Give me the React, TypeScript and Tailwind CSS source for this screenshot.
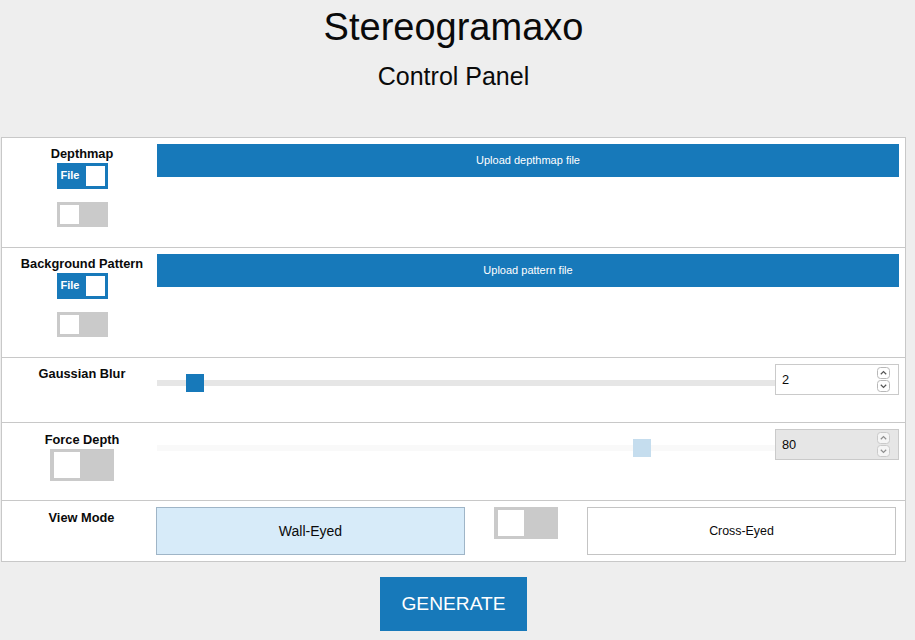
import React from "react";

const font = { fontFamily: '"Liberation Sans", Arial, sans-serif' };

function FileSwitch({ on }: { on: boolean }) {
  if (on) {
    return (
      <div className="relative w-[51px] h-[26px] bg-[#1779ba]">
        <span className="absolute left-[4px] top-[5px] text-[11px] leading-[14px] font-bold text-white">File</span>
        <div className="absolute right-[3px] top-[3px] w-[19px] h-[20px] bg-white" />
      </div>
    );
  }
  return (
    <div className="relative w-[51px] h-[25px] bg-[#cacaca]">
      <div className="absolute left-[3px] top-[3px] w-[19px] h-[19px] bg-white" />
    </div>
  );
}

function BigSwitch() {
  return (
    <div className="relative w-[64px] h-[32px] bg-[#cacaca]">
      <div className="absolute left-[4px] top-[3px] w-[26px] h-[26px] bg-white" />
    </div>
  );
}

function Spinner() {
  return (
    <div className="flex flex-col gap-[1px] mr-[8px]">
      <svg width="13" height="12" viewBox="0 0 13 12">
        <rect x="0.5" y="0.5" width="12" height="11" rx="3" fill="#fff" stroke="#b8b8b8" />
        <path d="M3.8 7.2 L6.5 4.6 L9.2 7.2" fill="none" stroke="#555" strokeWidth="1.2" />
      </svg>
      <svg width="13" height="12" viewBox="0 0 13 12">
        <rect x="0.5" y="0.5" width="12" height="11" rx="3" fill="#fff" stroke="#b8b8b8" />
        <path d="M3.8 4.8 L6.5 7.4 L9.2 4.8" fill="none" stroke="#555" strokeWidth="1.2" />
      </svg>
    </div>
  );
}

function NumberBox({ value, disabled }: { value: string; disabled?: boolean }) {
  return (
    <div
      className={
        "w-[124px] h-[31px] border border-[#cacaca] flex items-center justify-between shrink-0 " +
        (disabled ? "bg-[#e6e6e6]" : "bg-white")
      }
    >
      <span className="pl-[6px] text-[12.8px] text-[#0a0a0a]">{value}</span>
      <div className={disabled ? "opacity-60" : ""}>
        <Spinner />
      </div>
    </div>
  );
}

function Slider({ left, disabled }: { left: number; disabled?: boolean }) {
  return (
    <div className="flex-1 relative h-[18px] mt-[10px] flex items-center">
      <div className={"w-full h-[6px] " + (disabled ? "bg-[#f9f9f9]" : "bg-[#e6e6e6]")} />
      <div
        className={"absolute top-0 w-[18px] h-[18px] " + (disabled ? "bg-[#c5ddee]" : "bg-[#1779ba]")}
        style={{ left }}
      />
    </div>
  );
}

function Label({ children, pt }: { children: React.ReactNode; pt: string }) {
  return (
    <div className={"text-[12.8px] leading-[16px] font-bold text-[#0a0a0a] text-center " + pt}>{children}</div>
  );
}

export default function App() {
  return (
    <div className="min-h-[640px] bg-[#eeeeee] text-[#0a0a0a]" style={font}>
      <div className="w-[907px]">
        <div className="pt-[8px] text-center">
          <h1 className="text-[38px] leading-[38px] font-normal">Stereogramaxo</h1>
          <h2 className="mt-[18px] text-[25px] leading-[25px] font-normal">Control Panel</h2>
        </div>

        <div className="mt-[48px] ml-[1px] w-[905px] bg-white border-t border-x border-[#c8c8c8]">
          {/* Depthmap */}
          <div className="h-[110px] border-b border-[#c8c8c8] flex">
            <div className="w-[155px] pl-[5px] flex flex-col items-center">
              <Label pt="pt-[8px]">Depthmap</Label>
              <div className="mt-[1px]">
                <FileSwitch on />
              </div>
              <div className="mt-[13px]">
                <FileSwitch on={false} />
              </div>
            </div>
            <div className="flex-1 pr-[6px] pt-[6px]">
              <div className="h-[33px] bg-[#1779ba] text-white text-[11px] flex items-center justify-center">
                Upload depthmap file
              </div>
            </div>
          </div>

          {/* Background Pattern */}
          <div className="h-[110px] border-b border-[#c8c8c8] flex">
            <div className="w-[155px] pl-[5px] flex flex-col items-center">
              <Label pt="pt-[8px]">Background Pattern</Label>
              <div className="mt-[1px]">
                <FileSwitch on />
              </div>
              <div className="mt-[13px]">
                <FileSwitch on={false} />
              </div>
            </div>
            <div className="flex-1 pr-[6px] pt-[6px]">
              <div className="h-[33px] bg-[#1779ba] text-white text-[11px] flex items-center justify-center">
                Upload pattern file
              </div>
            </div>
          </div>

          {/* Gaussian Blur */}
          <div className="h-[65px] border-b border-[#c8c8c8] flex">
            <div className="w-[155px] pl-[5px] flex flex-col items-center">
              <Label pt="pt-[8px]">Gaussian Blur</Label>
            </div>
            <div className="flex-1 pr-[6px] pt-[6px] flex items-start">
              <Slider left={29} />
              <NumberBox value="2" />
            </div>
          </div>

          {/* Force Depth */}
          <div className="h-[78px] border-b border-[#c8c8c8] flex">
            <div className="w-[155px] pl-[5px] flex flex-col items-center">
              <Label pt="pt-[9px]">Force Depth</Label>
              <div className="mt-[1px]">
                <BigSwitch />
              </div>
            </div>
            <div className="flex-1 pr-[6px] pt-[6px] flex items-start">
              <Slider left={476} disabled />
              <NumberBox value="80" disabled />
            </div>
          </div>

          {/* View Mode */}
          <div className="h-[61px] border-b border-[#c8c8c8] flex">
            <div className="w-[154px] pl-[5px] flex flex-col items-center">
              <Label pt="pt-[9px]">View Mode</Label>
            </div>
            <div className="flex-1 pt-[6px] flex items-start">
              <div className="w-[309px] h-[48px] bg-[#d7ebf9] border border-[#9fb5c7] flex items-center justify-center text-[14px]">
                Wall-Eyed
              </div>
              <div className="ml-[29px]">
                <BigSwitch />
              </div>
              <div className="ml-[29px] w-[309px] h-[48px] bg-white border border-[#c4c4c4] flex items-center justify-center text-[12.4px]">
                Cross-Eyed
              </div>
            </div>
          </div>
        </div>

        <div className="mt-[15px] flex justify-center">
          <div className="w-[147px] h-[54px] bg-[#1779ba] text-white text-[19.2px] flex items-center justify-center">
            GENERATE
          </div>
        </div>
      </div>
    </div>
  );
}
